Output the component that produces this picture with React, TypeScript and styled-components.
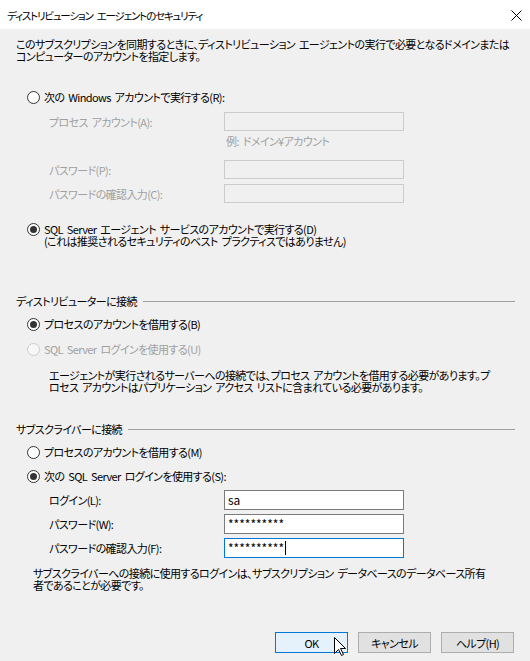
import React from "react";
import styled, { createGlobalStyle } from "styled-components";

const Global = createGlobalStyle`
  html, body { margin: 0; padding: 0; }
  body {
    background: #f0f0f0;
    font-family: "Noto Sans CJK JP", "Noto Sans", sans-serif;
    font-size: 11px;
    letter-spacing: -0.6px;
    word-spacing: 2px;
    color: #000;
    font-feature-settings: "palt";
  }
`;

const Window = styled.div`
  position: relative;
  width: 530px;
  height: 661px;
  display: flex;
  flex-direction: column;
  background: #f0f0f0;
  overflow: hidden;
`;

const TitleBar = styled.div`
  height: 29px;
  flex-shrink: 0;
  background: #fff;
  display: flex;
  align-items: center;
  justify-content: space-between;
  padding: 0 8px 0 7px;
`;

const Title = styled.span`
  font-size: 10.5px;
  letter-spacing: -1.2px;
  word-spacing: 3px;
  line-height: 12px;
  padding-top: 2px;
  white-space: nowrap;
`;

const CloseIcon = styled.svg`
  width: 11px;
  height: 11px;
  margin-top: 1px;
`;

const Body = styled.div`
  flex: 1;
  display: flex;
  flex-direction: column;
  padding: 9px 15px 0 16px;
`;

const Text = styled.div<{ $top?: number; $indent?: number; $muted?: boolean }>`
  margin-top: ${(p) => p.$top ?? 0}px;
  padding-left: ${(p) => p.$indent ?? 0}px;
  line-height: 12px;
  white-space: nowrap;
  color: ${(p) => (p.$muted ? "#a0a0a0" : "#000")};
`;

const RadioRow = styled.div<{ $top: number; $disabled?: boolean }>`
  margin-top: ${(p) => p.$top}px;
  padding-left: 11px;
  display: flex;
  align-items: flex-start;
  gap: 4px;
  line-height: 12px;
  white-space: nowrap;
  color: ${(p) => (p.$disabled ? "#a0a0a0" : "#000")};
`;

const RadioCircle = styled.span<{ $checked?: boolean; $disabled?: boolean }>`
  flex-shrink: 0;
  width: 13px;
  height: 13px;
  box-sizing: border-box;
  border-radius: 50%;
  border: 1px solid ${(p) => (p.$disabled ? "#cccccc" : "#333333")};
  background: ${(p) => (p.$disabled ? "#f7f7f7" : "#ffffff")};
  display: flex;
  align-items: center;
  justify-content: center;
  &::after {
    content: "";
    width: 7px;
    height: 7px;
    border-radius: 50%;
    background: #333333;
    display: ${(p) => (p.$checked ? "block" : "none")};
  }
`;

const FieldRow = styled.div<{ $top: number; $h: number; $disabled?: boolean }>`
  margin-top: ${(p) => p.$top}px;
  padding-left: 33px;
  display: grid;
  grid-template-columns: 175px 180px;
  align-items: center;
  height: ${(p) => p.$h}px;
  white-space: nowrap;
  line-height: 12px;
  color: ${(p) => (p.$disabled ? "#a0a0a0" : "#000")};
`;

const TextBox = styled.div<{ $state: "disabled" | "normal" | "focused" }>`
  box-sizing: border-box;
  width: 180px;
  height: 100%;
  padding: 0 3px;
  display: flex;
  align-items: center;
  font-size: 12px;
  letter-spacing: 0;
  color: #000;
  background: ${(p) => (p.$state === "disabled" ? "#f0f0f0" : "#fff")};
  border: 1px solid
    ${(p) =>
      p.$state === "disabled" ? "#cccccc" : p.$state === "focused" ? "#0078d7" : "#7a7a7a"};
`;

const Caret = styled.span`
  width: 1px;
  height: 14px;
  background: #000;
  margin-left: 1px;
`;

const SectionHeader = styled.div<{ $top: number }>`
  margin-top: ${(p) => p.$top}px;
  display: flex;
  align-items: center;
  gap: 6px;
  line-height: 12px;
  white-space: nowrap;
  &::after {
    content: "";
    flex: 1;
    height: 1px;
    background: #a0a0a0;
  }
`;

const ButtonBar = styled.div`
  margin-top: 41px;
  padding-right: 1px;
  display: flex;
  justify-content: flex-end;
  gap: 10px;
`;

const Button = styled.div<{ $primary?: boolean }>`
  box-sizing: border-box;
  width: 73px;
  height: 21px;
  display: flex;
  align-items: center;
  justify-content: center;
  line-height: 12px;
  background: ${(p) => (p.$primary ? "#e5f1fb" : "#e1e1e1")};
  border: 1px solid ${(p) => (p.$primary ? "#0078d7" : "#adadad")};
`;

const Cursor = styled.svg`
  position: absolute;
  left: 334px;
  top: 637px;
  width: 13px;
  height: 20px;
`;

export default function App() {
  return (
    <>
      <Global />
      <Window>
        <TitleBar>
          <Title>ディストリビューション エージェントのセキュリティ</Title>
          <CloseIcon viewBox="0 0 11 11">
            <path d="M0.5 0.5 L10.5 10.5 M10.5 0.5 L0.5 10.5" stroke="#000" strokeWidth="1" fill="none" />
          </CloseIcon>
        </TitleBar>
        <Body>
          <Text>
            このサブスクリプションを同期するときに、ディストリビューション エージェントの実行で必要となるドメインまたは
            <br />
            コンピューターのアカウントを指定します。
          </Text>

          <RadioRow $top={29}>
            <RadioCircle />
            <span>次の Windows アカウントで実行する(R):</span>
          </RadioRow>
          <FieldRow $top={8} $h={19} $disabled>
            <span>プロセス アカウント(A):</span>
            <TextBox $state="disabled" />
          </FieldRow>
          <Text $top={4} $indent={210} $muted>
            例: ドメイン¥アカウント
          </Text>
          <FieldRow $top={13} $h={19} $disabled>
            <span>パスワード(P):</span>
            <TextBox $state="disabled" />
          </FieldRow>
          <FieldRow $top={5} $h={19} $disabled>
            <span>パスワードの確認入力(C):</span>
            <TextBox $state="disabled" />
          </FieldRow>

          <RadioRow $top={20}>
            <RadioCircle $checked />
            <span>
              SQL Server エージェント サービスのアカウントで実行する(D)
              <br />
              (これは推奨されるセキュリティのベスト プラクティスではありません)
            </span>
          </RadioRow>

          <SectionHeader $top={48}>ディストリビューターに接続</SectionHeader>
          <RadioRow $top={11}>
            <RadioCircle $checked />
            <span>プロセスのアカウントを借用する(B)</span>
          </RadioRow>
          <RadioRow $top={12} $disabled>
            <RadioCircle $disabled />
            <span>SQL Server ログインを使用する(U)</span>
          </RadioRow>
          <Text $top={13} $indent={33}>
            エージェントが実行されるサーバーへの接続では、プロセス アカウントを借用する必要があります。プ
            <br />
            ロセス アカウントはパブリケーション アクセス リストに含まれている必要があります。
          </Text>

          <SectionHeader $top={30}>サブスクライバーに接続</SectionHeader>
          <RadioRow $top={11}>
            <RadioCircle />
            <span>プロセスのアカウントを借用する(M)</span>
          </RadioRow>
          <RadioRow $top={11}>
            <RadioCircle $checked />
            <span>次の SQL Server ログインを使用する(S):</span>
          </RadioRow>
          <FieldRow $top={7} $h={20}>
            <span>ログイン(L):</span>
            <TextBox $state="normal">sa</TextBox>
          </FieldRow>
          <FieldRow $top={4} $h={20}>
            <span>パスワード(W):</span>
            <TextBox $state="normal">**********</TextBox>
          </FieldRow>
          <FieldRow $top={4} $h={20}>
            <span>パスワードの確認入力(F):</span>
            <TextBox $state="focused">
              **********
              <Caret />
            </TextBox>
          </FieldRow>
          <Text $top={9} $indent={17}>
            サブスクライバーへの接続に使用するログインは、サブスクリプション データベースのデータベース所有
            <br />
            者であることが必要です。
          </Text>

          <ButtonBar>
            <Button $primary>OK</Button>
            <Button>キャンセル</Button>
            <Button>ヘルプ(H)</Button>
          </ButtonBar>
        </Body>
        <Cursor viewBox="0 0 13 20">
          <path
            d="M0.5 0.5 L0.5 16.5 L4.5 12.5 L7.5 18.5 L9.5 17.5 L6.5 11.5 L11.5 11.5 Z"
            fill="#fff"
            stroke="#000"
            strokeWidth="1"
            strokeLinejoin="miter"
          />
        </Cursor>
      </Window>
    </>
  );
}
